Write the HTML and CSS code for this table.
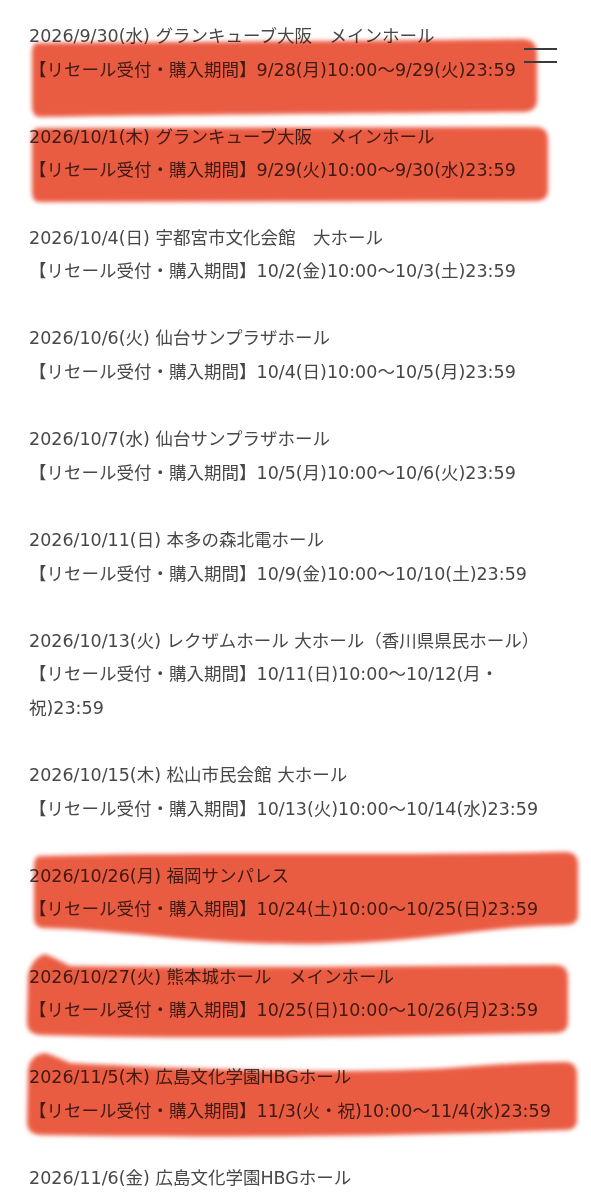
FILE: index.html
```html
<!DOCTYPE html>
<html lang="ja">
<head>
<meta charset="utf-8">
<title>リセール受付・購入期間</title>
<link rel="stylesheet" href="styles.css">
</head>
<body>
<button class="menu-btn" aria-label="menu"><span class="bar"></span><span class="bar"></span></button>
<main class="list">
  <p class="entry">2026/9/30(水) グランキューブ大阪　メインホール<br>【リセール受付・購入期間】9/28(月)10:00〜9/29(火)23:59</p>
  <p class="entry">2026/10/1(木) グランキューブ大阪　メインホール<br>【リセール受付・購入期間】9/29(火)10:00〜9/30(水)23:59</p>
  <p class="entry">2026/10/4(日) 宇都宮市文化会館　大ホール<br>【リセール受付・購入期間】10/2(金)10:00〜10/3(土)23:59</p>
  <p class="entry">2026/10/6(火) 仙台サンプラザホール<br>【リセール受付・購入期間】10/4(日)10:00〜10/5(月)23:59</p>
  <p class="entry">2026/10/7(水) 仙台サンプラザホール<br>【リセール受付・購入期間】10/5(月)10:00〜10/6(火)23:59</p>
  <p class="entry">2026/10/11(日) 本多の森北電ホール<br>【リセール受付・購入期間】10/9(金)10:00〜10/10(土)23:59</p>
  <p class="entry">2026/10/13(火) レクザムホール 大ホール（香川県県民ホール）<br>【リセール受付・購入期間】10/11(日)10:00〜10/12(月・祝)23:59</p>
  <p class="entry">2026/10/15(木) 松山市民会館 大ホール<br>【リセール受付・購入期間】10/13(火)10:00〜10/14(水)23:59</p>
  <p class="entry">2026/10/26(月) 福岡サンパレス<br>【リセール受付・購入期間】10/24(土)10:00〜10/25(日)23:59</p>
  <p class="entry">2026/10/27(火) 熊本城ホール　メインホール<br>【リセール受付・購入期間】10/25(日)10:00〜10/26(月)23:59</p>
  <p class="entry">2026/11/5(木) 広島文化学園HBGホール<br>【リセール受付・購入期間】11/3(火・祝)10:00〜11/4(水)23:59</p>
  <p class="entry">2026/11/6(金) 広島文化学園HBGホール</p>
</main>
<svg class="marks" width="591" height="1200" viewBox="0 0 591 1200" aria-hidden="true">
  <defs>
    <filter id="soft" x="-5%" y="-20%" width="110%" height="140%">
      <feGaussianBlur stdDeviation="2"/>
    </filter>
  </defs>
  <g class="ink" filter="url(#soft)">
    <path d="M38,43 C150,42 400,41 522,39 Q537,39 537,54 L537,100 Q537,112 522,112 C400,113 150,115 40,117 Q32,117 32,105 L32,52 Q32,43 38,43 Z"/>
    <path d="M38,128 L535,127 Q548,127 548,140 L548,190 Q548,201 535,201 L40,202 Q32,202 32,192 L32,138 Q32,128 38,128 Z"/>
    <path d="M40,856 C200,852 400,856 565,852 Q578,852 578,865 L578,915 Q578,925 565,925 C480,926 420,944 300,944 C200,944 120,930 45,928 Q34,928 34,918 L34,866 Q34,856 40,856 Z"/>
    <path d="M28,975 Q32,958 45,954 Q55,958 70,966 C250,968 400,966 555,965 Q568,965 568,978 L568,1022 Q568,1033 555,1033 C400,1036 200,1040 40,1035 Q27,1034 27,1022 Z"/>
    <path d="M28,1070 Q30,1055 45,1053 Q55,1056 70,1063 C200,1070 350,1074 450,1068 C500,1064 540,1062 565,1062 Q577,1062 577,1075 L577,1120 Q577,1130 565,1130 C400,1136 200,1138 40,1135 Q27,1134 27,1122 Z"/>
  </g>
</svg>
</body>
</html>
```
FILE: styles.css
```css
html, body {
  margin: 0;
  padding: 0;
  background: #ffffff;
}

body {
  position: relative;
  width: 591px;
  height: 1200px;
  overflow: hidden;
  font-family: "DejaVu Sans", "Noto Sans CJK JP", sans-serif;
  color: #474747;
}

.list {
  padding: 20px 32px 0 29px;
}

.entry {
  margin: 0 0 33.6px;
  font-size: 17.5px;
  line-height: 33.6px;
}

.menu-btn {
  position: absolute;
  top: 48px;
  left: 524px;
  display: flex;
  flex-direction: column;
  gap: 11px;
  width: 33px;
  padding: 0;
  border: 0;
  background: transparent;
  z-index: 3;
}

.menu-btn .bar {
  display: block;
  width: 33px;
  height: 2px;
  background: #3a3a3a;
}

.marks {
  position: absolute;
  top: 0;
  left: 0;
  mix-blend-mode: multiply;
  pointer-events: none;
  z-index: 2;
}

.marks .ink path {
  fill: #ea5b43;
}
```
